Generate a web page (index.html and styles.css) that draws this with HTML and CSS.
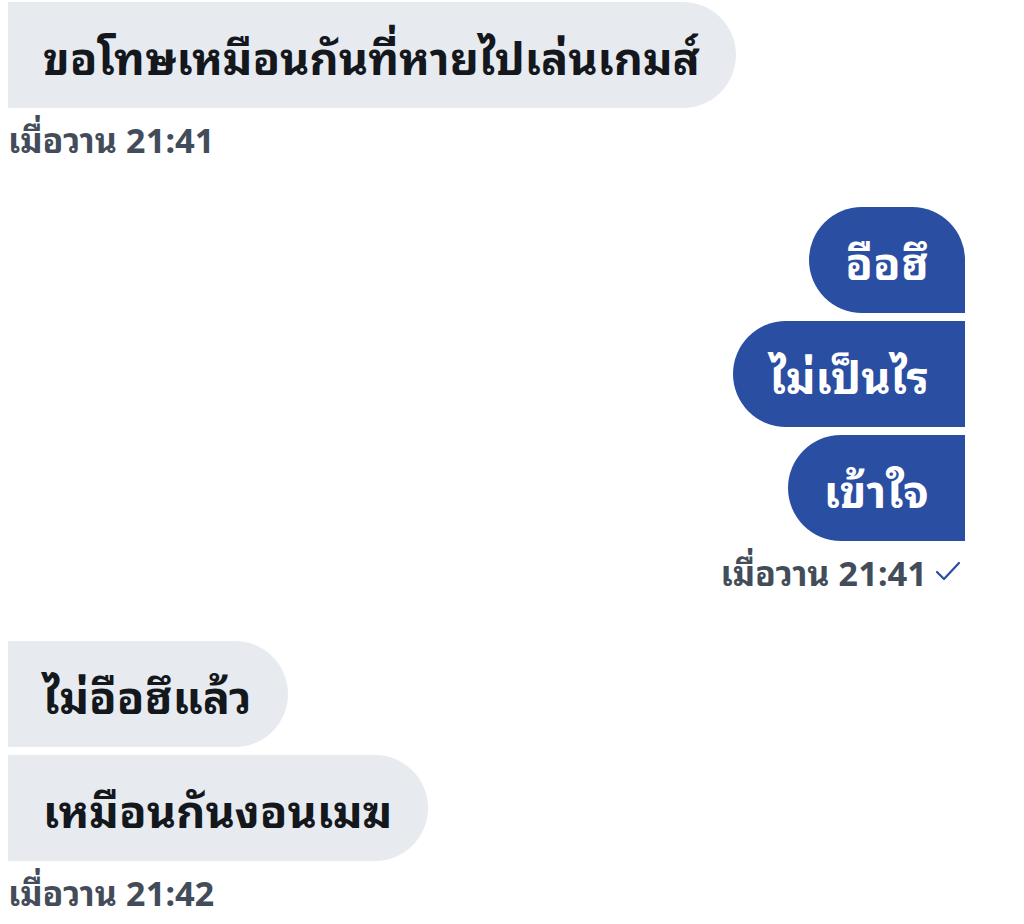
FILE: index.html
```html
<!DOCTYPE html>
<html lang="th">
<head>
<meta charset="utf-8">
<link rel="stylesheet" href="styles.css">
</head>
<body>
<div class="chat">
  <div class="group in first">
    <div class="bubble in-b">ขอโทษเหมือนกันที่หายไปเล่นเกมส์</div>
    <div class="time">เมื่อวาน 21:41</div>
  </div>
  <div class="group out">
    <div class="bubble out-b top">อือฮึ</div>
    <div class="bubble out-b mid">ไม่เป็นไร</div>
    <div class="bubble out-b mid">เข้าใจ</div>
    <div class="time">เมื่อวาน 21:41 <svg class="check" width="26" height="22" viewBox="0 0 26 22"><path d="M2 12 L9 19 L24 3" fill="none" stroke="#2b4ea2" stroke-width="2.2" stroke-linecap="round" stroke-linejoin="round"/></svg></div>
  </div>
  <div class="group in">
    <div class="bubble in-b">ไม่อือฮึแล้ว</div>
    <div class="bubble in-b">เหมือนกันงอนเมฆ</div>
    <div class="time">เมื่อวาน 21:42</div>
  </div>
</div>
</body>
</html>
```
FILE: styles.css
```css
html, body {
  margin: 0;
  padding: 0;
  background: #ffffff;
}
body {
  font-family: "Noto Sans Thai Looped", "Loma", "Garuda", "Tlwg Typo", "Noto Sans Thai", "Noto Sans", sans-serif;
}
.chat {
  padding: 2px 59px 0 8px;
  display: flex;
  flex-direction: column;
}
.group {
  display: flex;
  flex-direction: column;
  gap: 8px;
}
.group.in { align-items: flex-start; margin-top: 48px; }
.group.in.first { margin-top: 0; }
.group.out { align-items: flex-end; margin-top: 47px; }
.bubble {
  height: 106px;
  box-sizing: border-box;
  display: flex;
  align-items: center;
  font-size: 45px;
  font-weight: 700;
  white-space: nowrap;
}
.in-b {
  background: #e7ebf0;
  color: #14181d;
  padding: 0 36px 0 35px;
  border-radius: 0 53px 53px 0;
}
.out-b {
  background: #2a4ea2;
  color: #ffffff;
  padding: 0 36px;
}
.out-b.top { border-radius: 53px 53px 0 53px; }
.out-b.mid { border-radius: 53px 0 0 53px; }
.time {
  font-size: 34px;
  font-weight: 700;
  color: #434d5a;
  line-height: 44px;
  display: flex;
  align-items: center;
  gap: 8px;
}
.group.out .time { margin-right: 4px; }
.check { display: block; }
```
